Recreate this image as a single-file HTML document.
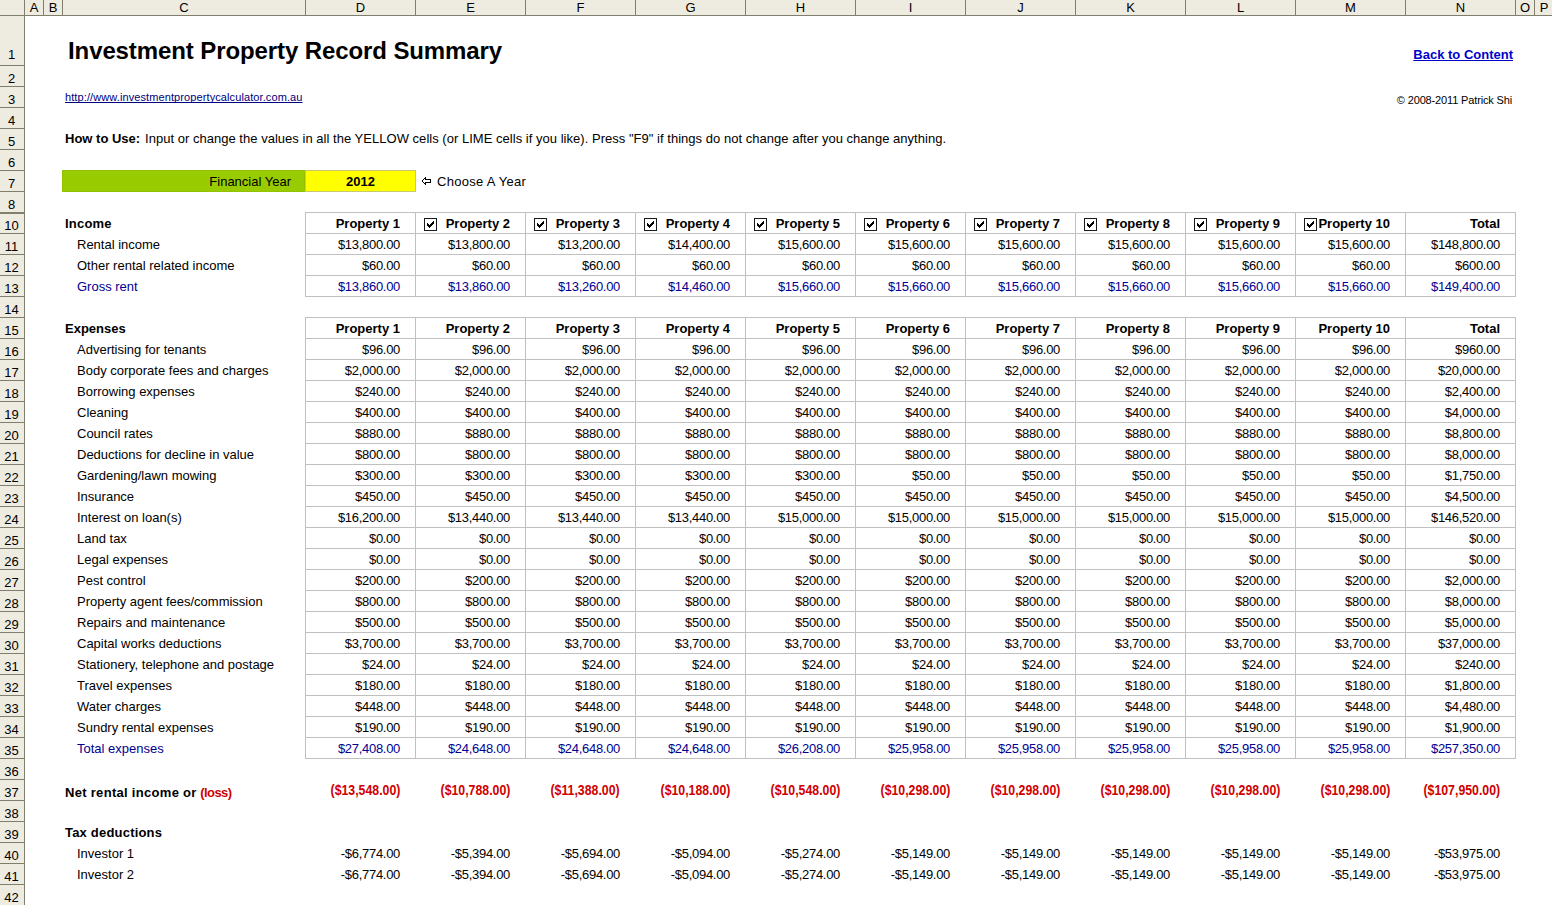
<!DOCTYPE html>
<html><head><meta charset="utf-8"><style>
*{margin:0;padding:0;box-sizing:border-box}
html,body{width:1552px;height:905px;overflow:hidden;background:#fff}
body{position:relative;font-family:"Liberation Sans",sans-serif;font-size:13px;color:#000}
.t{position:absolute;white-space:nowrap;line-height:15px;height:15px}
.c{text-align:center}
.b{font-weight:bold}
.n{letter-spacing:-0.3px}
.blue{color:#000090}
.red{color:#D00000}
.hl{position:absolute;height:1px}
.vl{position:absolute;width:1px}
.bx{position:absolute;background:#EEEBE0}
.cb{position:absolute;width:13px;height:13px;border:1px solid #1a1a1a;background:#fff}
.cb svg{position:absolute;left:1px;top:1px}
.nr{letter-spacing:-0.4px}
.nar{letter-spacing:-0.6px}
.ls{letter-spacing:0.2px}
</style></head>
<body>
<div class="bx" style="left:0;top:0;width:1552px;height:15px"></div>
<div class="bx" style="left:0;top:0;width:24px;height:905px"></div>
<div class="hl" style="left:0;top:15px;width:1552px;background:#807E6D"></div>
<div class="vl" style="left:24px;top:0;height:905px;background:#807E6D"></div>
<div class="vl" style="left:43px;top:0;height:15px;background:#807E6D"></div>
<div class="vl" style="left:62px;top:0;height:15px;background:#807E6D"></div>
<div class="vl" style="left:305px;top:0;height:15px;background:#807E6D"></div>
<div class="vl" style="left:415px;top:0;height:15px;background:#807E6D"></div>
<div class="vl" style="left:525px;top:0;height:15px;background:#807E6D"></div>
<div class="vl" style="left:635px;top:0;height:15px;background:#807E6D"></div>
<div class="vl" style="left:745px;top:0;height:15px;background:#807E6D"></div>
<div class="vl" style="left:855px;top:0;height:15px;background:#807E6D"></div>
<div class="vl" style="left:965px;top:0;height:15px;background:#807E6D"></div>
<div class="vl" style="left:1075px;top:0;height:15px;background:#807E6D"></div>
<div class="vl" style="left:1185px;top:0;height:15px;background:#807E6D"></div>
<div class="vl" style="left:1295px;top:0;height:15px;background:#807E6D"></div>
<div class="vl" style="left:1405px;top:0;height:15px;background:#807E6D"></div>
<div class="vl" style="left:1515px;top:0;height:15px;background:#807E6D"></div>
<div class="vl" style="left:1534px;top:0;height:15px;background:#807E6D"></div>
<div class="t c" style="left:25px;width:18px;top:0px">A</div>
<div class="t c" style="left:44px;width:18px;top:0px">B</div>
<div class="t c" style="left:63px;width:242px;top:0px">C</div>
<div class="t c" style="left:306px;width:109px;top:0px">D</div>
<div class="t c" style="left:416px;width:109px;top:0px">E</div>
<div class="t c" style="left:526px;width:109px;top:0px">F</div>
<div class="t c" style="left:636px;width:109px;top:0px">G</div>
<div class="t c" style="left:746px;width:109px;top:0px">H</div>
<div class="t c" style="left:856px;width:109px;top:0px">I</div>
<div class="t c" style="left:966px;width:109px;top:0px">J</div>
<div class="t c" style="left:1076px;width:109px;top:0px">K</div>
<div class="t c" style="left:1186px;width:109px;top:0px">L</div>
<div class="t c" style="left:1296px;width:109px;top:0px">M</div>
<div class="t c" style="left:1406px;width:109px;top:0px">N</div>
<div class="t c" style="left:1516px;width:18px;top:0px">O</div>
<div class="t c" style="left:1535px;width:18px;top:0px">P</div>
<div class="hl" style="left:0;top:65px;width:24px;background:#807E6D"></div>
<div class="t c" style="left:0;width:23px;top:47px">1</div>
<div class="hl" style="left:0;top:86px;width:24px;background:#807E6D"></div>
<div class="t c" style="left:0;width:23px;top:71px">2</div>
<div class="hl" style="left:0;top:107px;width:24px;background:#807E6D"></div>
<div class="t c" style="left:0;width:23px;top:92px">3</div>
<div class="hl" style="left:0;top:128px;width:24px;background:#807E6D"></div>
<div class="t c" style="left:0;width:23px;top:113px">4</div>
<div class="hl" style="left:0;top:149px;width:24px;background:#807E6D"></div>
<div class="t c" style="left:0;width:23px;top:134px">5</div>
<div class="hl" style="left:0;top:170px;width:24px;background:#807E6D"></div>
<div class="t c" style="left:0;width:23px;top:155px">6</div>
<div class="hl" style="left:0;top:191px;width:24px;background:#807E6D"></div>
<div class="t c" style="left:0;width:23px;top:176px">7</div>
<div class="hl" style="left:0;top:212px;width:24px;background:#807E6D"></div>
<div class="hl" style="left:0;top:213px;width:24px;background:#807E6D"></div>
<div class="t c" style="left:0;width:23px;top:197px">8</div>
<div class="hl" style="left:0;top:233px;width:24px;background:#807E6D"></div>
<div class="t c" style="left:0;width:23px;top:218px">10</div>
<div class="hl" style="left:0;top:254px;width:24px;background:#807E6D"></div>
<div class="t c" style="left:0;width:23px;top:239px">11</div>
<div class="hl" style="left:0;top:275px;width:24px;background:#807E6D"></div>
<div class="t c" style="left:0;width:23px;top:260px">12</div>
<div class="hl" style="left:0;top:296px;width:24px;background:#807E6D"></div>
<div class="t c" style="left:0;width:23px;top:281px">13</div>
<div class="hl" style="left:0;top:317px;width:24px;background:#807E6D"></div>
<div class="t c" style="left:0;width:23px;top:302px">14</div>
<div class="hl" style="left:0;top:338px;width:24px;background:#807E6D"></div>
<div class="t c" style="left:0;width:23px;top:323px">15</div>
<div class="hl" style="left:0;top:359px;width:24px;background:#807E6D"></div>
<div class="t c" style="left:0;width:23px;top:344px">16</div>
<div class="hl" style="left:0;top:380px;width:24px;background:#807E6D"></div>
<div class="t c" style="left:0;width:23px;top:365px">17</div>
<div class="hl" style="left:0;top:401px;width:24px;background:#807E6D"></div>
<div class="t c" style="left:0;width:23px;top:386px">18</div>
<div class="hl" style="left:0;top:422px;width:24px;background:#807E6D"></div>
<div class="t c" style="left:0;width:23px;top:407px">19</div>
<div class="hl" style="left:0;top:443px;width:24px;background:#807E6D"></div>
<div class="t c" style="left:0;width:23px;top:428px">20</div>
<div class="hl" style="left:0;top:464px;width:24px;background:#807E6D"></div>
<div class="t c" style="left:0;width:23px;top:449px">21</div>
<div class="hl" style="left:0;top:485px;width:24px;background:#807E6D"></div>
<div class="t c" style="left:0;width:23px;top:470px">22</div>
<div class="hl" style="left:0;top:506px;width:24px;background:#807E6D"></div>
<div class="t c" style="left:0;width:23px;top:491px">23</div>
<div class="hl" style="left:0;top:527px;width:24px;background:#807E6D"></div>
<div class="t c" style="left:0;width:23px;top:512px">24</div>
<div class="hl" style="left:0;top:548px;width:24px;background:#807E6D"></div>
<div class="t c" style="left:0;width:23px;top:533px">25</div>
<div class="hl" style="left:0;top:569px;width:24px;background:#807E6D"></div>
<div class="t c" style="left:0;width:23px;top:554px">26</div>
<div class="hl" style="left:0;top:590px;width:24px;background:#807E6D"></div>
<div class="t c" style="left:0;width:23px;top:575px">27</div>
<div class="hl" style="left:0;top:611px;width:24px;background:#807E6D"></div>
<div class="t c" style="left:0;width:23px;top:596px">28</div>
<div class="hl" style="left:0;top:632px;width:24px;background:#807E6D"></div>
<div class="t c" style="left:0;width:23px;top:617px">29</div>
<div class="hl" style="left:0;top:653px;width:24px;background:#807E6D"></div>
<div class="t c" style="left:0;width:23px;top:638px">30</div>
<div class="hl" style="left:0;top:674px;width:24px;background:#807E6D"></div>
<div class="t c" style="left:0;width:23px;top:659px">31</div>
<div class="hl" style="left:0;top:695px;width:24px;background:#807E6D"></div>
<div class="t c" style="left:0;width:23px;top:680px">32</div>
<div class="hl" style="left:0;top:716px;width:24px;background:#807E6D"></div>
<div class="t c" style="left:0;width:23px;top:701px">33</div>
<div class="hl" style="left:0;top:737px;width:24px;background:#807E6D"></div>
<div class="t c" style="left:0;width:23px;top:722px">34</div>
<div class="hl" style="left:0;top:758px;width:24px;background:#807E6D"></div>
<div class="t c" style="left:0;width:23px;top:743px">35</div>
<div class="hl" style="left:0;top:779px;width:24px;background:#807E6D"></div>
<div class="t c" style="left:0;width:23px;top:764px">36</div>
<div class="hl" style="left:0;top:800px;width:24px;background:#807E6D"></div>
<div class="t c" style="left:0;width:23px;top:785px">37</div>
<div class="hl" style="left:0;top:821px;width:24px;background:#807E6D"></div>
<div class="t c" style="left:0;width:23px;top:806px">38</div>
<div class="hl" style="left:0;top:842px;width:24px;background:#807E6D"></div>
<div class="t c" style="left:0;width:23px;top:827px">39</div>
<div class="hl" style="left:0;top:863px;width:24px;background:#807E6D"></div>
<div class="t c" style="left:0;width:23px;top:848px">40</div>
<div class="hl" style="left:0;top:884px;width:24px;background:#807E6D"></div>
<div class="t c" style="left:0;width:23px;top:869px">41</div>
<div class="hl" style="left:0;top:905px;width:24px;background:#807E6D"></div>
<div class="t c" style="left:0;width:23px;top:890px">42</div>
<div class="t b" style="left:68px;top:37px;font-size:24px;line-height:27px;height:27px;letter-spacing:-0.1px">Investment Property Record Summary</div>
<div class="t b r" style="right:39px;top:47px;color:#0000CC;text-decoration:underline">Back to Content</div>
<div class="t" style="left:65px;top:91px;font-size:11px;line-height:13px;height:13px;color:#000080;text-decoration:underline;text-decoration-skip-ink:none;letter-spacing:0.1px">http://www.investmentpropertycalculator.com.au</div>
<div class="t r" style="right:40px;top:94px;font-size:11px;line-height:13px;height:13px;letter-spacing:-0.15px">&copy; 2008-2011 Patrick Shi</div>
<div class="t b" style="left:65px;top:131px;">How to Use:</div>
<div class="t " style="left:145px;top:131px;letter-spacing:0.026px">Input or change the values in all the YELLOW cells (or LIME cells if you like). Press "F9" if things do not change after you change anything.</div>
<div style="position:absolute;left:62px;top:170px;width:243px;height:22px;background:#99CC00;border:1px solid #93c000"></div>
<div style="position:absolute;left:305px;top:170px;width:111px;height:22px;background:#FFFF00;border:1px solid #C8C870"></div>
<div class="t r " style="right:1261px;top:174px;">Financial Year</div>
<div class="t c b" style="left:305px;width:111px;top:174px">2012</div>
<svg style="position:absolute;left:422px;top:177px" width="9" height="8" shape-rendering="crispEdges"><rect x="3" y="0" width="1" height="1"/><rect x="2" y="1" width="1" height="1"/><rect x="3" y="1" width="1" height="1"/><rect x="1" y="2" width="1" height="1"/><rect x="3" y="2" width="1" height="1"/><rect x="4" y="2" width="1" height="1"/><rect x="5" y="2" width="1" height="1"/><rect x="6" y="2" width="1" height="1"/><rect x="7" y="2" width="1" height="1"/><rect x="8" y="2" width="1" height="1"/><rect x="0" y="3" width="1" height="1"/><rect x="0" y="4" width="1" height="1"/><rect x="8" y="3" width="1" height="1"/><rect x="8" y="4" width="1" height="1"/><rect x="1" y="5" width="1" height="1"/><rect x="3" y="5" width="1" height="1"/><rect x="4" y="5" width="1" height="1"/><rect x="5" y="5" width="1" height="1"/><rect x="6" y="5" width="1" height="1"/><rect x="7" y="5" width="1" height="1"/><rect x="8" y="5" width="1" height="1"/><rect x="2" y="6" width="1" height="1"/><rect x="3" y="6" width="1" height="1"/><rect x="3" y="7" width="1" height="1"/></svg>
<div class="t " style="left:437px;top:174px;letter-spacing:0.3px">Choose A Year</div>
<div class="hl" style="left:305px;top:212px;width:1211px;background:#C0C0C0"></div>
<div class="hl" style="left:305px;top:233px;width:1211px;background:#C0C0C0"></div>
<div class="hl" style="left:305px;top:254px;width:1211px;background:#C0C0C0"></div>
<div class="hl" style="left:305px;top:275px;width:1211px;background:#C0C0C0"></div>
<div class="hl" style="left:305px;top:296px;width:1211px;background:#C0C0C0"></div>
<div class="vl" style="left:305px;top:212px;height:85px;background:#C0C0C0"></div>
<div class="vl" style="left:415px;top:212px;height:85px;background:#C0C0C0"></div>
<div class="vl" style="left:525px;top:212px;height:85px;background:#C0C0C0"></div>
<div class="vl" style="left:635px;top:212px;height:85px;background:#C0C0C0"></div>
<div class="vl" style="left:745px;top:212px;height:85px;background:#C0C0C0"></div>
<div class="vl" style="left:855px;top:212px;height:85px;background:#C0C0C0"></div>
<div class="vl" style="left:965px;top:212px;height:85px;background:#C0C0C0"></div>
<div class="vl" style="left:1075px;top:212px;height:85px;background:#C0C0C0"></div>
<div class="vl" style="left:1185px;top:212px;height:85px;background:#C0C0C0"></div>
<div class="vl" style="left:1295px;top:212px;height:85px;background:#C0C0C0"></div>
<div class="vl" style="left:1405px;top:212px;height:85px;background:#C0C0C0"></div>
<div class="vl" style="left:1515px;top:212px;height:85px;background:#C0C0C0"></div>
<div class="t b ls" style="left:65px;top:216px;">Income</div>
<div class="t r b" style="right:1152px;top:216px">Property 1</div>
<div class="t r b" style="right:1042px;top:216px">Property 2</div>
<div class="cb" style="left:424px;top:218px"><svg width="11" height="11" shape-rendering="crispEdges"><rect x="7" y="1" width="1" height="1"/><rect x="6" y="2" width="1" height="1"/><rect x="7" y="2" width="1" height="1"/><rect x="1" y="3" width="1" height="1"/><rect x="5" y="3" width="1" height="1"/><rect x="6" y="3" width="1" height="1"/><rect x="7" y="3" width="1" height="1"/><rect x="1" y="4" width="1" height="1"/><rect x="2" y="4" width="1" height="1"/><rect x="4" y="4" width="1" height="1"/><rect x="5" y="4" width="1" height="1"/><rect x="6" y="4" width="1" height="1"/><rect x="1" y="5" width="1" height="1"/><rect x="2" y="5" width="1" height="1"/><rect x="3" y="5" width="1" height="1"/><rect x="4" y="5" width="1" height="1"/><rect x="5" y="5" width="1" height="1"/><rect x="2" y="6" width="1" height="1"/><rect x="3" y="6" width="1" height="1"/><rect x="4" y="6" width="1" height="1"/><rect x="3" y="7" width="1" height="1"/></svg></div>
<div class="t r b" style="right:932px;top:216px">Property 3</div>
<div class="cb" style="left:534px;top:218px"><svg width="11" height="11" shape-rendering="crispEdges"><rect x="7" y="1" width="1" height="1"/><rect x="6" y="2" width="1" height="1"/><rect x="7" y="2" width="1" height="1"/><rect x="1" y="3" width="1" height="1"/><rect x="5" y="3" width="1" height="1"/><rect x="6" y="3" width="1" height="1"/><rect x="7" y="3" width="1" height="1"/><rect x="1" y="4" width="1" height="1"/><rect x="2" y="4" width="1" height="1"/><rect x="4" y="4" width="1" height="1"/><rect x="5" y="4" width="1" height="1"/><rect x="6" y="4" width="1" height="1"/><rect x="1" y="5" width="1" height="1"/><rect x="2" y="5" width="1" height="1"/><rect x="3" y="5" width="1" height="1"/><rect x="4" y="5" width="1" height="1"/><rect x="5" y="5" width="1" height="1"/><rect x="2" y="6" width="1" height="1"/><rect x="3" y="6" width="1" height="1"/><rect x="4" y="6" width="1" height="1"/><rect x="3" y="7" width="1" height="1"/></svg></div>
<div class="t r b" style="right:822px;top:216px">Property 4</div>
<div class="cb" style="left:644px;top:218px"><svg width="11" height="11" shape-rendering="crispEdges"><rect x="7" y="1" width="1" height="1"/><rect x="6" y="2" width="1" height="1"/><rect x="7" y="2" width="1" height="1"/><rect x="1" y="3" width="1" height="1"/><rect x="5" y="3" width="1" height="1"/><rect x="6" y="3" width="1" height="1"/><rect x="7" y="3" width="1" height="1"/><rect x="1" y="4" width="1" height="1"/><rect x="2" y="4" width="1" height="1"/><rect x="4" y="4" width="1" height="1"/><rect x="5" y="4" width="1" height="1"/><rect x="6" y="4" width="1" height="1"/><rect x="1" y="5" width="1" height="1"/><rect x="2" y="5" width="1" height="1"/><rect x="3" y="5" width="1" height="1"/><rect x="4" y="5" width="1" height="1"/><rect x="5" y="5" width="1" height="1"/><rect x="2" y="6" width="1" height="1"/><rect x="3" y="6" width="1" height="1"/><rect x="4" y="6" width="1" height="1"/><rect x="3" y="7" width="1" height="1"/></svg></div>
<div class="t r b" style="right:712px;top:216px">Property 5</div>
<div class="cb" style="left:754px;top:218px"><svg width="11" height="11" shape-rendering="crispEdges"><rect x="7" y="1" width="1" height="1"/><rect x="6" y="2" width="1" height="1"/><rect x="7" y="2" width="1" height="1"/><rect x="1" y="3" width="1" height="1"/><rect x="5" y="3" width="1" height="1"/><rect x="6" y="3" width="1" height="1"/><rect x="7" y="3" width="1" height="1"/><rect x="1" y="4" width="1" height="1"/><rect x="2" y="4" width="1" height="1"/><rect x="4" y="4" width="1" height="1"/><rect x="5" y="4" width="1" height="1"/><rect x="6" y="4" width="1" height="1"/><rect x="1" y="5" width="1" height="1"/><rect x="2" y="5" width="1" height="1"/><rect x="3" y="5" width="1" height="1"/><rect x="4" y="5" width="1" height="1"/><rect x="5" y="5" width="1" height="1"/><rect x="2" y="6" width="1" height="1"/><rect x="3" y="6" width="1" height="1"/><rect x="4" y="6" width="1" height="1"/><rect x="3" y="7" width="1" height="1"/></svg></div>
<div class="t r b" style="right:602px;top:216px">Property 6</div>
<div class="cb" style="left:864px;top:218px"><svg width="11" height="11" shape-rendering="crispEdges"><rect x="7" y="1" width="1" height="1"/><rect x="6" y="2" width="1" height="1"/><rect x="7" y="2" width="1" height="1"/><rect x="1" y="3" width="1" height="1"/><rect x="5" y="3" width="1" height="1"/><rect x="6" y="3" width="1" height="1"/><rect x="7" y="3" width="1" height="1"/><rect x="1" y="4" width="1" height="1"/><rect x="2" y="4" width="1" height="1"/><rect x="4" y="4" width="1" height="1"/><rect x="5" y="4" width="1" height="1"/><rect x="6" y="4" width="1" height="1"/><rect x="1" y="5" width="1" height="1"/><rect x="2" y="5" width="1" height="1"/><rect x="3" y="5" width="1" height="1"/><rect x="4" y="5" width="1" height="1"/><rect x="5" y="5" width="1" height="1"/><rect x="2" y="6" width="1" height="1"/><rect x="3" y="6" width="1" height="1"/><rect x="4" y="6" width="1" height="1"/><rect x="3" y="7" width="1" height="1"/></svg></div>
<div class="t r b" style="right:492px;top:216px">Property 7</div>
<div class="cb" style="left:974px;top:218px"><svg width="11" height="11" shape-rendering="crispEdges"><rect x="7" y="1" width="1" height="1"/><rect x="6" y="2" width="1" height="1"/><rect x="7" y="2" width="1" height="1"/><rect x="1" y="3" width="1" height="1"/><rect x="5" y="3" width="1" height="1"/><rect x="6" y="3" width="1" height="1"/><rect x="7" y="3" width="1" height="1"/><rect x="1" y="4" width="1" height="1"/><rect x="2" y="4" width="1" height="1"/><rect x="4" y="4" width="1" height="1"/><rect x="5" y="4" width="1" height="1"/><rect x="6" y="4" width="1" height="1"/><rect x="1" y="5" width="1" height="1"/><rect x="2" y="5" width="1" height="1"/><rect x="3" y="5" width="1" height="1"/><rect x="4" y="5" width="1" height="1"/><rect x="5" y="5" width="1" height="1"/><rect x="2" y="6" width="1" height="1"/><rect x="3" y="6" width="1" height="1"/><rect x="4" y="6" width="1" height="1"/><rect x="3" y="7" width="1" height="1"/></svg></div>
<div class="t r b" style="right:382px;top:216px">Property 8</div>
<div class="cb" style="left:1084px;top:218px"><svg width="11" height="11" shape-rendering="crispEdges"><rect x="7" y="1" width="1" height="1"/><rect x="6" y="2" width="1" height="1"/><rect x="7" y="2" width="1" height="1"/><rect x="1" y="3" width="1" height="1"/><rect x="5" y="3" width="1" height="1"/><rect x="6" y="3" width="1" height="1"/><rect x="7" y="3" width="1" height="1"/><rect x="1" y="4" width="1" height="1"/><rect x="2" y="4" width="1" height="1"/><rect x="4" y="4" width="1" height="1"/><rect x="5" y="4" width="1" height="1"/><rect x="6" y="4" width="1" height="1"/><rect x="1" y="5" width="1" height="1"/><rect x="2" y="5" width="1" height="1"/><rect x="3" y="5" width="1" height="1"/><rect x="4" y="5" width="1" height="1"/><rect x="5" y="5" width="1" height="1"/><rect x="2" y="6" width="1" height="1"/><rect x="3" y="6" width="1" height="1"/><rect x="4" y="6" width="1" height="1"/><rect x="3" y="7" width="1" height="1"/></svg></div>
<div class="t r b" style="right:272px;top:216px">Property 9</div>
<div class="cb" style="left:1194px;top:218px"><svg width="11" height="11" shape-rendering="crispEdges"><rect x="7" y="1" width="1" height="1"/><rect x="6" y="2" width="1" height="1"/><rect x="7" y="2" width="1" height="1"/><rect x="1" y="3" width="1" height="1"/><rect x="5" y="3" width="1" height="1"/><rect x="6" y="3" width="1" height="1"/><rect x="7" y="3" width="1" height="1"/><rect x="1" y="4" width="1" height="1"/><rect x="2" y="4" width="1" height="1"/><rect x="4" y="4" width="1" height="1"/><rect x="5" y="4" width="1" height="1"/><rect x="6" y="4" width="1" height="1"/><rect x="1" y="5" width="1" height="1"/><rect x="2" y="5" width="1" height="1"/><rect x="3" y="5" width="1" height="1"/><rect x="4" y="5" width="1" height="1"/><rect x="5" y="5" width="1" height="1"/><rect x="2" y="6" width="1" height="1"/><rect x="3" y="6" width="1" height="1"/><rect x="4" y="6" width="1" height="1"/><rect x="3" y="7" width="1" height="1"/></svg></div>
<div class="t r b" style="right:162px;top:216px">Property 10</div>
<div class="cb" style="left:1304px;top:218px"><svg width="11" height="11" shape-rendering="crispEdges"><rect x="7" y="1" width="1" height="1"/><rect x="6" y="2" width="1" height="1"/><rect x="7" y="2" width="1" height="1"/><rect x="1" y="3" width="1" height="1"/><rect x="5" y="3" width="1" height="1"/><rect x="6" y="3" width="1" height="1"/><rect x="7" y="3" width="1" height="1"/><rect x="1" y="4" width="1" height="1"/><rect x="2" y="4" width="1" height="1"/><rect x="4" y="4" width="1" height="1"/><rect x="5" y="4" width="1" height="1"/><rect x="6" y="4" width="1" height="1"/><rect x="1" y="5" width="1" height="1"/><rect x="2" y="5" width="1" height="1"/><rect x="3" y="5" width="1" height="1"/><rect x="4" y="5" width="1" height="1"/><rect x="5" y="5" width="1" height="1"/><rect x="2" y="6" width="1" height="1"/><rect x="3" y="6" width="1" height="1"/><rect x="4" y="6" width="1" height="1"/><rect x="3" y="7" width="1" height="1"/></svg></div>
<div class="t r b" style="right:52px;top:216px">Total</div>
<div class="t " style="left:77px;top:237px;">Rental income</div>
<div class="t r n" style="right:1152px;top:237px">$13,800.00</div>
<div class="t r n" style="right:1042px;top:237px">$13,800.00</div>
<div class="t r n" style="right:932px;top:237px">$13,200.00</div>
<div class="t r n" style="right:822px;top:237px">$14,400.00</div>
<div class="t r n" style="right:712px;top:237px">$15,600.00</div>
<div class="t r n" style="right:602px;top:237px">$15,600.00</div>
<div class="t r n" style="right:492px;top:237px">$15,600.00</div>
<div class="t r n" style="right:382px;top:237px">$15,600.00</div>
<div class="t r n" style="right:272px;top:237px">$15,600.00</div>
<div class="t r n" style="right:162px;top:237px">$15,600.00</div>
<div class="t r n" style="right:52px;top:237px">$148,800.00</div>
<div class="t " style="left:77px;top:258px;">Other rental related income</div>
<div class="t r n" style="right:1152px;top:258px">$60.00</div>
<div class="t r n" style="right:1042px;top:258px">$60.00</div>
<div class="t r n" style="right:932px;top:258px">$60.00</div>
<div class="t r n" style="right:822px;top:258px">$60.00</div>
<div class="t r n" style="right:712px;top:258px">$60.00</div>
<div class="t r n" style="right:602px;top:258px">$60.00</div>
<div class="t r n" style="right:492px;top:258px">$60.00</div>
<div class="t r n" style="right:382px;top:258px">$60.00</div>
<div class="t r n" style="right:272px;top:258px">$60.00</div>
<div class="t r n" style="right:162px;top:258px">$60.00</div>
<div class="t r n" style="right:52px;top:258px">$600.00</div>
<div class="t blue" style="left:77px;top:279px;">Gross rent</div>
<div class="t r n blue" style="right:1152px;top:279px">$13,860.00</div>
<div class="t r n blue" style="right:1042px;top:279px">$13,860.00</div>
<div class="t r n blue" style="right:932px;top:279px">$13,260.00</div>
<div class="t r n blue" style="right:822px;top:279px">$14,460.00</div>
<div class="t r n blue" style="right:712px;top:279px">$15,660.00</div>
<div class="t r n blue" style="right:602px;top:279px">$15,660.00</div>
<div class="t r n blue" style="right:492px;top:279px">$15,660.00</div>
<div class="t r n blue" style="right:382px;top:279px">$15,660.00</div>
<div class="t r n blue" style="right:272px;top:279px">$15,660.00</div>
<div class="t r n blue" style="right:162px;top:279px">$15,660.00</div>
<div class="t r n blue" style="right:52px;top:279px">$149,400.00</div>
<div class="hl" style="left:305px;top:317px;width:1211px;background:#C0C0C0"></div>
<div class="hl" style="left:305px;top:338px;width:1211px;background:#C0C0C0"></div>
<div class="hl" style="left:305px;top:359px;width:1211px;background:#C0C0C0"></div>
<div class="hl" style="left:305px;top:380px;width:1211px;background:#C0C0C0"></div>
<div class="hl" style="left:305px;top:401px;width:1211px;background:#C0C0C0"></div>
<div class="hl" style="left:305px;top:422px;width:1211px;background:#C0C0C0"></div>
<div class="hl" style="left:305px;top:443px;width:1211px;background:#C0C0C0"></div>
<div class="hl" style="left:305px;top:464px;width:1211px;background:#C0C0C0"></div>
<div class="hl" style="left:305px;top:485px;width:1211px;background:#C0C0C0"></div>
<div class="hl" style="left:305px;top:506px;width:1211px;background:#C0C0C0"></div>
<div class="hl" style="left:305px;top:527px;width:1211px;background:#C0C0C0"></div>
<div class="hl" style="left:305px;top:548px;width:1211px;background:#C0C0C0"></div>
<div class="hl" style="left:305px;top:569px;width:1211px;background:#C0C0C0"></div>
<div class="hl" style="left:305px;top:590px;width:1211px;background:#C0C0C0"></div>
<div class="hl" style="left:305px;top:611px;width:1211px;background:#C0C0C0"></div>
<div class="hl" style="left:305px;top:632px;width:1211px;background:#C0C0C0"></div>
<div class="hl" style="left:305px;top:653px;width:1211px;background:#C0C0C0"></div>
<div class="hl" style="left:305px;top:674px;width:1211px;background:#C0C0C0"></div>
<div class="hl" style="left:305px;top:695px;width:1211px;background:#C0C0C0"></div>
<div class="hl" style="left:305px;top:716px;width:1211px;background:#C0C0C0"></div>
<div class="hl" style="left:305px;top:737px;width:1211px;background:#C0C0C0"></div>
<div class="hl" style="left:305px;top:758px;width:1211px;background:#C0C0C0"></div>
<div class="vl" style="left:305px;top:317px;height:442px;background:#C0C0C0"></div>
<div class="vl" style="left:415px;top:317px;height:442px;background:#C0C0C0"></div>
<div class="vl" style="left:525px;top:317px;height:442px;background:#C0C0C0"></div>
<div class="vl" style="left:635px;top:317px;height:442px;background:#C0C0C0"></div>
<div class="vl" style="left:745px;top:317px;height:442px;background:#C0C0C0"></div>
<div class="vl" style="left:855px;top:317px;height:442px;background:#C0C0C0"></div>
<div class="vl" style="left:965px;top:317px;height:442px;background:#C0C0C0"></div>
<div class="vl" style="left:1075px;top:317px;height:442px;background:#C0C0C0"></div>
<div class="vl" style="left:1185px;top:317px;height:442px;background:#C0C0C0"></div>
<div class="vl" style="left:1295px;top:317px;height:442px;background:#C0C0C0"></div>
<div class="vl" style="left:1405px;top:317px;height:442px;background:#C0C0C0"></div>
<div class="vl" style="left:1515px;top:317px;height:442px;background:#C0C0C0"></div>
<div class="t b" style="left:65px;top:321px;">Expenses</div>
<div class="t r b" style="right:1152px;top:321px">Property 1</div>
<div class="t r b" style="right:1042px;top:321px">Property 2</div>
<div class="t r b" style="right:932px;top:321px">Property 3</div>
<div class="t r b" style="right:822px;top:321px">Property 4</div>
<div class="t r b" style="right:712px;top:321px">Property 5</div>
<div class="t r b" style="right:602px;top:321px">Property 6</div>
<div class="t r b" style="right:492px;top:321px">Property 7</div>
<div class="t r b" style="right:382px;top:321px">Property 8</div>
<div class="t r b" style="right:272px;top:321px">Property 9</div>
<div class="t r b" style="right:162px;top:321px">Property 10</div>
<div class="t r b" style="right:52px;top:321px">Total</div>
<div class="t " style="left:77px;top:342px;">Advertising for tenants</div>
<div class="t r n" style="right:1152px;top:342px">$96.00</div>
<div class="t r n" style="right:1042px;top:342px">$96.00</div>
<div class="t r n" style="right:932px;top:342px">$96.00</div>
<div class="t r n" style="right:822px;top:342px">$96.00</div>
<div class="t r n" style="right:712px;top:342px">$96.00</div>
<div class="t r n" style="right:602px;top:342px">$96.00</div>
<div class="t r n" style="right:492px;top:342px">$96.00</div>
<div class="t r n" style="right:382px;top:342px">$96.00</div>
<div class="t r n" style="right:272px;top:342px">$96.00</div>
<div class="t r n" style="right:162px;top:342px">$96.00</div>
<div class="t r n" style="right:52px;top:342px">$960.00</div>
<div class="t " style="left:77px;top:363px;">Body corporate fees and charges</div>
<div class="t r n" style="right:1152px;top:363px">$2,000.00</div>
<div class="t r n" style="right:1042px;top:363px">$2,000.00</div>
<div class="t r n" style="right:932px;top:363px">$2,000.00</div>
<div class="t r n" style="right:822px;top:363px">$2,000.00</div>
<div class="t r n" style="right:712px;top:363px">$2,000.00</div>
<div class="t r n" style="right:602px;top:363px">$2,000.00</div>
<div class="t r n" style="right:492px;top:363px">$2,000.00</div>
<div class="t r n" style="right:382px;top:363px">$2,000.00</div>
<div class="t r n" style="right:272px;top:363px">$2,000.00</div>
<div class="t r n" style="right:162px;top:363px">$2,000.00</div>
<div class="t r n" style="right:52px;top:363px">$20,000.00</div>
<div class="t " style="left:77px;top:384px;">Borrowing expenses</div>
<div class="t r n" style="right:1152px;top:384px">$240.00</div>
<div class="t r n" style="right:1042px;top:384px">$240.00</div>
<div class="t r n" style="right:932px;top:384px">$240.00</div>
<div class="t r n" style="right:822px;top:384px">$240.00</div>
<div class="t r n" style="right:712px;top:384px">$240.00</div>
<div class="t r n" style="right:602px;top:384px">$240.00</div>
<div class="t r n" style="right:492px;top:384px">$240.00</div>
<div class="t r n" style="right:382px;top:384px">$240.00</div>
<div class="t r n" style="right:272px;top:384px">$240.00</div>
<div class="t r n" style="right:162px;top:384px">$240.00</div>
<div class="t r n" style="right:52px;top:384px">$2,400.00</div>
<div class="t " style="left:77px;top:405px;">Cleaning</div>
<div class="t r n" style="right:1152px;top:405px">$400.00</div>
<div class="t r n" style="right:1042px;top:405px">$400.00</div>
<div class="t r n" style="right:932px;top:405px">$400.00</div>
<div class="t r n" style="right:822px;top:405px">$400.00</div>
<div class="t r n" style="right:712px;top:405px">$400.00</div>
<div class="t r n" style="right:602px;top:405px">$400.00</div>
<div class="t r n" style="right:492px;top:405px">$400.00</div>
<div class="t r n" style="right:382px;top:405px">$400.00</div>
<div class="t r n" style="right:272px;top:405px">$400.00</div>
<div class="t r n" style="right:162px;top:405px">$400.00</div>
<div class="t r n" style="right:52px;top:405px">$4,000.00</div>
<div class="t " style="left:77px;top:426px;">Council rates</div>
<div class="t r n" style="right:1152px;top:426px">$880.00</div>
<div class="t r n" style="right:1042px;top:426px">$880.00</div>
<div class="t r n" style="right:932px;top:426px">$880.00</div>
<div class="t r n" style="right:822px;top:426px">$880.00</div>
<div class="t r n" style="right:712px;top:426px">$880.00</div>
<div class="t r n" style="right:602px;top:426px">$880.00</div>
<div class="t r n" style="right:492px;top:426px">$880.00</div>
<div class="t r n" style="right:382px;top:426px">$880.00</div>
<div class="t r n" style="right:272px;top:426px">$880.00</div>
<div class="t r n" style="right:162px;top:426px">$880.00</div>
<div class="t r n" style="right:52px;top:426px">$8,800.00</div>
<div class="t " style="left:77px;top:447px;">Deductions for decline in value</div>
<div class="t r n" style="right:1152px;top:447px">$800.00</div>
<div class="t r n" style="right:1042px;top:447px">$800.00</div>
<div class="t r n" style="right:932px;top:447px">$800.00</div>
<div class="t r n" style="right:822px;top:447px">$800.00</div>
<div class="t r n" style="right:712px;top:447px">$800.00</div>
<div class="t r n" style="right:602px;top:447px">$800.00</div>
<div class="t r n" style="right:492px;top:447px">$800.00</div>
<div class="t r n" style="right:382px;top:447px">$800.00</div>
<div class="t r n" style="right:272px;top:447px">$800.00</div>
<div class="t r n" style="right:162px;top:447px">$800.00</div>
<div class="t r n" style="right:52px;top:447px">$8,000.00</div>
<div class="t " style="left:77px;top:468px;">Gardening/lawn mowing</div>
<div class="t r n" style="right:1152px;top:468px">$300.00</div>
<div class="t r n" style="right:1042px;top:468px">$300.00</div>
<div class="t r n" style="right:932px;top:468px">$300.00</div>
<div class="t r n" style="right:822px;top:468px">$300.00</div>
<div class="t r n" style="right:712px;top:468px">$300.00</div>
<div class="t r n" style="right:602px;top:468px">$50.00</div>
<div class="t r n" style="right:492px;top:468px">$50.00</div>
<div class="t r n" style="right:382px;top:468px">$50.00</div>
<div class="t r n" style="right:272px;top:468px">$50.00</div>
<div class="t r n" style="right:162px;top:468px">$50.00</div>
<div class="t r n" style="right:52px;top:468px">$1,750.00</div>
<div class="t " style="left:77px;top:489px;">Insurance</div>
<div class="t r n" style="right:1152px;top:489px">$450.00</div>
<div class="t r n" style="right:1042px;top:489px">$450.00</div>
<div class="t r n" style="right:932px;top:489px">$450.00</div>
<div class="t r n" style="right:822px;top:489px">$450.00</div>
<div class="t r n" style="right:712px;top:489px">$450.00</div>
<div class="t r n" style="right:602px;top:489px">$450.00</div>
<div class="t r n" style="right:492px;top:489px">$450.00</div>
<div class="t r n" style="right:382px;top:489px">$450.00</div>
<div class="t r n" style="right:272px;top:489px">$450.00</div>
<div class="t r n" style="right:162px;top:489px">$450.00</div>
<div class="t r n" style="right:52px;top:489px">$4,500.00</div>
<div class="t " style="left:77px;top:510px;">Interest on loan(s)</div>
<div class="t r n" style="right:1152px;top:510px">$16,200.00</div>
<div class="t r n" style="right:1042px;top:510px">$13,440.00</div>
<div class="t r n" style="right:932px;top:510px">$13,440.00</div>
<div class="t r n" style="right:822px;top:510px">$13,440.00</div>
<div class="t r n" style="right:712px;top:510px">$15,000.00</div>
<div class="t r n" style="right:602px;top:510px">$15,000.00</div>
<div class="t r n" style="right:492px;top:510px">$15,000.00</div>
<div class="t r n" style="right:382px;top:510px">$15,000.00</div>
<div class="t r n" style="right:272px;top:510px">$15,000.00</div>
<div class="t r n" style="right:162px;top:510px">$15,000.00</div>
<div class="t r n" style="right:52px;top:510px">$146,520.00</div>
<div class="t " style="left:77px;top:531px;">Land tax</div>
<div class="t r n" style="right:1152px;top:531px">$0.00</div>
<div class="t r n" style="right:1042px;top:531px">$0.00</div>
<div class="t r n" style="right:932px;top:531px">$0.00</div>
<div class="t r n" style="right:822px;top:531px">$0.00</div>
<div class="t r n" style="right:712px;top:531px">$0.00</div>
<div class="t r n" style="right:602px;top:531px">$0.00</div>
<div class="t r n" style="right:492px;top:531px">$0.00</div>
<div class="t r n" style="right:382px;top:531px">$0.00</div>
<div class="t r n" style="right:272px;top:531px">$0.00</div>
<div class="t r n" style="right:162px;top:531px">$0.00</div>
<div class="t r n" style="right:52px;top:531px">$0.00</div>
<div class="t " style="left:77px;top:552px;">Legal expenses</div>
<div class="t r n" style="right:1152px;top:552px">$0.00</div>
<div class="t r n" style="right:1042px;top:552px">$0.00</div>
<div class="t r n" style="right:932px;top:552px">$0.00</div>
<div class="t r n" style="right:822px;top:552px">$0.00</div>
<div class="t r n" style="right:712px;top:552px">$0.00</div>
<div class="t r n" style="right:602px;top:552px">$0.00</div>
<div class="t r n" style="right:492px;top:552px">$0.00</div>
<div class="t r n" style="right:382px;top:552px">$0.00</div>
<div class="t r n" style="right:272px;top:552px">$0.00</div>
<div class="t r n" style="right:162px;top:552px">$0.00</div>
<div class="t r n" style="right:52px;top:552px">$0.00</div>
<div class="t " style="left:77px;top:573px;">Pest control</div>
<div class="t r n" style="right:1152px;top:573px">$200.00</div>
<div class="t r n" style="right:1042px;top:573px">$200.00</div>
<div class="t r n" style="right:932px;top:573px">$200.00</div>
<div class="t r n" style="right:822px;top:573px">$200.00</div>
<div class="t r n" style="right:712px;top:573px">$200.00</div>
<div class="t r n" style="right:602px;top:573px">$200.00</div>
<div class="t r n" style="right:492px;top:573px">$200.00</div>
<div class="t r n" style="right:382px;top:573px">$200.00</div>
<div class="t r n" style="right:272px;top:573px">$200.00</div>
<div class="t r n" style="right:162px;top:573px">$200.00</div>
<div class="t r n" style="right:52px;top:573px">$2,000.00</div>
<div class="t " style="left:77px;top:594px;">Property agent fees/commission</div>
<div class="t r n" style="right:1152px;top:594px">$800.00</div>
<div class="t r n" style="right:1042px;top:594px">$800.00</div>
<div class="t r n" style="right:932px;top:594px">$800.00</div>
<div class="t r n" style="right:822px;top:594px">$800.00</div>
<div class="t r n" style="right:712px;top:594px">$800.00</div>
<div class="t r n" style="right:602px;top:594px">$800.00</div>
<div class="t r n" style="right:492px;top:594px">$800.00</div>
<div class="t r n" style="right:382px;top:594px">$800.00</div>
<div class="t r n" style="right:272px;top:594px">$800.00</div>
<div class="t r n" style="right:162px;top:594px">$800.00</div>
<div class="t r n" style="right:52px;top:594px">$8,000.00</div>
<div class="t " style="left:77px;top:615px;">Repairs and maintenance</div>
<div class="t r n" style="right:1152px;top:615px">$500.00</div>
<div class="t r n" style="right:1042px;top:615px">$500.00</div>
<div class="t r n" style="right:932px;top:615px">$500.00</div>
<div class="t r n" style="right:822px;top:615px">$500.00</div>
<div class="t r n" style="right:712px;top:615px">$500.00</div>
<div class="t r n" style="right:602px;top:615px">$500.00</div>
<div class="t r n" style="right:492px;top:615px">$500.00</div>
<div class="t r n" style="right:382px;top:615px">$500.00</div>
<div class="t r n" style="right:272px;top:615px">$500.00</div>
<div class="t r n" style="right:162px;top:615px">$500.00</div>
<div class="t r n" style="right:52px;top:615px">$5,000.00</div>
<div class="t " style="left:77px;top:636px;">Capital works deductions</div>
<div class="t r n" style="right:1152px;top:636px">$3,700.00</div>
<div class="t r n" style="right:1042px;top:636px">$3,700.00</div>
<div class="t r n" style="right:932px;top:636px">$3,700.00</div>
<div class="t r n" style="right:822px;top:636px">$3,700.00</div>
<div class="t r n" style="right:712px;top:636px">$3,700.00</div>
<div class="t r n" style="right:602px;top:636px">$3,700.00</div>
<div class="t r n" style="right:492px;top:636px">$3,700.00</div>
<div class="t r n" style="right:382px;top:636px">$3,700.00</div>
<div class="t r n" style="right:272px;top:636px">$3,700.00</div>
<div class="t r n" style="right:162px;top:636px">$3,700.00</div>
<div class="t r n" style="right:52px;top:636px">$37,000.00</div>
<div class="t " style="left:77px;top:657px;">Stationery, telephone and postage</div>
<div class="t r n" style="right:1152px;top:657px">$24.00</div>
<div class="t r n" style="right:1042px;top:657px">$24.00</div>
<div class="t r n" style="right:932px;top:657px">$24.00</div>
<div class="t r n" style="right:822px;top:657px">$24.00</div>
<div class="t r n" style="right:712px;top:657px">$24.00</div>
<div class="t r n" style="right:602px;top:657px">$24.00</div>
<div class="t r n" style="right:492px;top:657px">$24.00</div>
<div class="t r n" style="right:382px;top:657px">$24.00</div>
<div class="t r n" style="right:272px;top:657px">$24.00</div>
<div class="t r n" style="right:162px;top:657px">$24.00</div>
<div class="t r n" style="right:52px;top:657px">$240.00</div>
<div class="t " style="left:77px;top:678px;">Travel expenses</div>
<div class="t r n" style="right:1152px;top:678px">$180.00</div>
<div class="t r n" style="right:1042px;top:678px">$180.00</div>
<div class="t r n" style="right:932px;top:678px">$180.00</div>
<div class="t r n" style="right:822px;top:678px">$180.00</div>
<div class="t r n" style="right:712px;top:678px">$180.00</div>
<div class="t r n" style="right:602px;top:678px">$180.00</div>
<div class="t r n" style="right:492px;top:678px">$180.00</div>
<div class="t r n" style="right:382px;top:678px">$180.00</div>
<div class="t r n" style="right:272px;top:678px">$180.00</div>
<div class="t r n" style="right:162px;top:678px">$180.00</div>
<div class="t r n" style="right:52px;top:678px">$1,800.00</div>
<div class="t " style="left:77px;top:699px;">Water charges</div>
<div class="t r n" style="right:1152px;top:699px">$448.00</div>
<div class="t r n" style="right:1042px;top:699px">$448.00</div>
<div class="t r n" style="right:932px;top:699px">$448.00</div>
<div class="t r n" style="right:822px;top:699px">$448.00</div>
<div class="t r n" style="right:712px;top:699px">$448.00</div>
<div class="t r n" style="right:602px;top:699px">$448.00</div>
<div class="t r n" style="right:492px;top:699px">$448.00</div>
<div class="t r n" style="right:382px;top:699px">$448.00</div>
<div class="t r n" style="right:272px;top:699px">$448.00</div>
<div class="t r n" style="right:162px;top:699px">$448.00</div>
<div class="t r n" style="right:52px;top:699px">$4,480.00</div>
<div class="t " style="left:77px;top:720px;">Sundry rental expenses</div>
<div class="t r n" style="right:1152px;top:720px">$190.00</div>
<div class="t r n" style="right:1042px;top:720px">$190.00</div>
<div class="t r n" style="right:932px;top:720px">$190.00</div>
<div class="t r n" style="right:822px;top:720px">$190.00</div>
<div class="t r n" style="right:712px;top:720px">$190.00</div>
<div class="t r n" style="right:602px;top:720px">$190.00</div>
<div class="t r n" style="right:492px;top:720px">$190.00</div>
<div class="t r n" style="right:382px;top:720px">$190.00</div>
<div class="t r n" style="right:272px;top:720px">$190.00</div>
<div class="t r n" style="right:162px;top:720px">$190.00</div>
<div class="t r n" style="right:52px;top:720px">$1,900.00</div>
<div class="t blue" style="left:77px;top:741px;">Total expenses</div>
<div class="t r n blue" style="right:1152px;top:741px">$27,408.00</div>
<div class="t r n blue" style="right:1042px;top:741px">$24,648.00</div>
<div class="t r n blue" style="right:932px;top:741px">$24,648.00</div>
<div class="t r n blue" style="right:822px;top:741px">$24,648.00</div>
<div class="t r n blue" style="right:712px;top:741px">$26,208.00</div>
<div class="t r n blue" style="right:602px;top:741px">$25,958.00</div>
<div class="t r n blue" style="right:492px;top:741px">$25,958.00</div>
<div class="t r n blue" style="right:382px;top:741px">$25,958.00</div>
<div class="t r n blue" style="right:272px;top:741px">$25,958.00</div>
<div class="t r n blue" style="right:162px;top:741px">$25,958.00</div>
<div class="t r n blue" style="right:52px;top:741px">$257,350.00</div>
<div class="t " style="left:65px;top:785px;"><b style="letter-spacing:0.3px">Net rental income or</b> <b class="red nar">(loss)</b></div>
<div class="t r b red" style="right:1152px;top:783px;font-size:14px;transform:scaleX(0.88);transform-origin:100% 50%">($13,548.00)</div>
<div class="t r b red" style="right:1042px;top:783px;font-size:14px;transform:scaleX(0.88);transform-origin:100% 50%">($10,788.00)</div>
<div class="t r b red" style="right:932px;top:783px;font-size:14px;transform:scaleX(0.88);transform-origin:100% 50%">($11,388.00)</div>
<div class="t r b red" style="right:822px;top:783px;font-size:14px;transform:scaleX(0.88);transform-origin:100% 50%">($10,188.00)</div>
<div class="t r b red" style="right:712px;top:783px;font-size:14px;transform:scaleX(0.88);transform-origin:100% 50%">($10,548.00)</div>
<div class="t r b red" style="right:602px;top:783px;font-size:14px;transform:scaleX(0.88);transform-origin:100% 50%">($10,298.00)</div>
<div class="t r b red" style="right:492px;top:783px;font-size:14px;transform:scaleX(0.88);transform-origin:100% 50%">($10,298.00)</div>
<div class="t r b red" style="right:382px;top:783px;font-size:14px;transform:scaleX(0.88);transform-origin:100% 50%">($10,298.00)</div>
<div class="t r b red" style="right:272px;top:783px;font-size:14px;transform:scaleX(0.88);transform-origin:100% 50%">($10,298.00)</div>
<div class="t r b red" style="right:162px;top:783px;font-size:14px;transform:scaleX(0.88);transform-origin:100% 50%">($10,298.00)</div>
<div class="t r b red" style="right:52px;top:783px;font-size:14px;transform:scaleX(0.88);transform-origin:100% 50%">($107,950.00)</div>
<div class="t b ls" style="left:65px;top:825px;">Tax deductions</div>
<div class="t " style="left:77px;top:846px;">Investor 1</div>
<div class="t r n" style="right:1152px;top:846px">-$6,774.00</div>
<div class="t r n" style="right:1042px;top:846px">-$5,394.00</div>
<div class="t r n" style="right:932px;top:846px">-$5,694.00</div>
<div class="t r n" style="right:822px;top:846px">-$5,094.00</div>
<div class="t r n" style="right:712px;top:846px">-$5,274.00</div>
<div class="t r n" style="right:602px;top:846px">-$5,149.00</div>
<div class="t r n" style="right:492px;top:846px">-$5,149.00</div>
<div class="t r n" style="right:382px;top:846px">-$5,149.00</div>
<div class="t r n" style="right:272px;top:846px">-$5,149.00</div>
<div class="t r n" style="right:162px;top:846px">-$5,149.00</div>
<div class="t r n" style="right:52px;top:846px">-$53,975.00</div>
<div class="t " style="left:77px;top:867px;">Investor 2</div>
<div class="t r n" style="right:1152px;top:867px">-$6,774.00</div>
<div class="t r n" style="right:1042px;top:867px">-$5,394.00</div>
<div class="t r n" style="right:932px;top:867px">-$5,694.00</div>
<div class="t r n" style="right:822px;top:867px">-$5,094.00</div>
<div class="t r n" style="right:712px;top:867px">-$5,274.00</div>
<div class="t r n" style="right:602px;top:867px">-$5,149.00</div>
<div class="t r n" style="right:492px;top:867px">-$5,149.00</div>
<div class="t r n" style="right:382px;top:867px">-$5,149.00</div>
<div class="t r n" style="right:272px;top:867px">-$5,149.00</div>
<div class="t r n" style="right:162px;top:867px">-$5,149.00</div>
<div class="t r n" style="right:52px;top:867px">-$53,975.00</div>
</body></html>
